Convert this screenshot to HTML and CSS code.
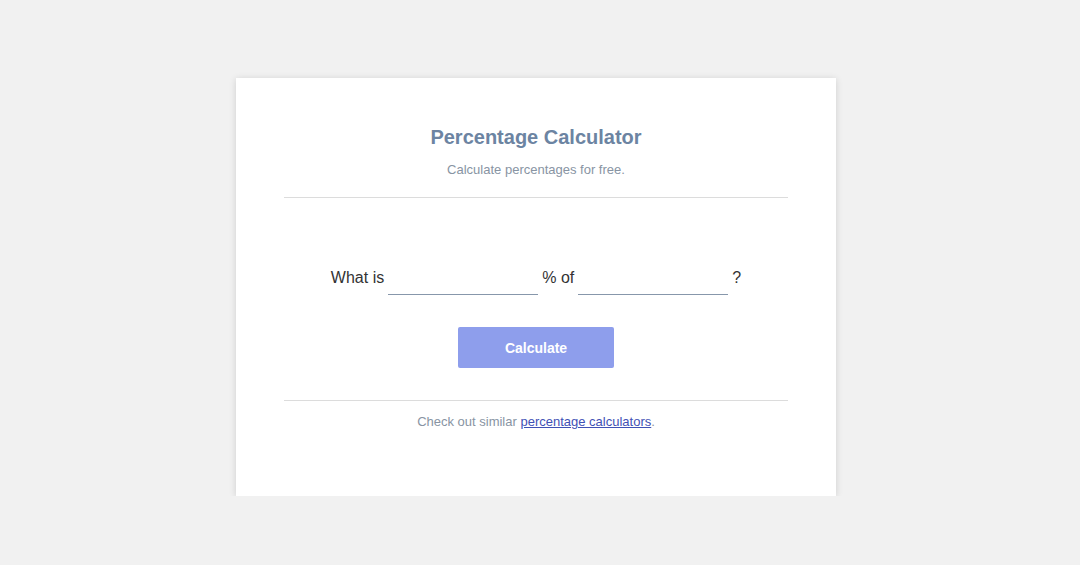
FILE: index.html
```html
<!DOCTYPE html>
<html>
<head>
<meta charset="utf-8">
<link rel="stylesheet" href="styles.css">
</head>
<body>
<main class="page">
  <section class="card">
    <header class="head">
      <h1 class="title">Percentage Calculator</h1>
      <p class="subtitle">Calculate percentages for free.</p>
    </header>
    <div class="calc">
      <div class="row">
        <span class="label">What is</span>
        <input class="field" type="text">
        <span class="label">% of</span>
        <input class="field" type="text">
        <span class="label">?</span>
      </div>
      <button class="btn" type="button">Calculate</button>
    </div>
    <footer class="foot">
      Check out similar <a class="link" href="#">percentage calculators</a>.
    </footer>
  </section>
</main>
</body>
</html>
```
FILE: styles.css
```css
html, body {
  margin: 0;
  padding: 0;
  background: #f1f1f1;
  font-family: "Liberation Sans", Arial, sans-serif;
}
.page {
  display: flex;
  justify-content: center;
  padding-top: 78px;
  padding-right: 8px;
}
.card {
  width: 600px;
  height: 418px;
  box-sizing: border-box;
  background: #fff;
  box-shadow: 0 1px 7px rgba(0,0,0,0.14);
  padding: 0 48px;
  display: flex;
  flex-direction: column;
}
.head {
  text-align: center;
  padding-top: 47px;
  padding-bottom: 19px;
  border-bottom: 1px solid #dcdcdc;
}
.title {
  margin: 0;
  font-size: 20px;
  font-weight: bold;
  color: #6c84a2;
  line-height: 24px;
}
.subtitle {
  margin: 13px 0 0;
  font-size: 13px;
  color: #8894a3;
  line-height: 16px;
}
.calc {
  display: flex;
  flex-direction: column;
  align-items: center;
  padding-top: 67px;
  padding-bottom: 32px;
  border-bottom: 1px solid #dcdcdc;
}
.row {
  display: flex;
  align-items: flex-end;
  gap: 4px;
}
.label {
  font-size: 16px;
  color: #333;
  line-height: 18px;
  padding-bottom: 8px;
}
.field {
  width: 150px;
  height: 30px;
  box-sizing: border-box;
  border: none;
  border-bottom: 1px solid #8797ab;
  outline: none;
  background: transparent;
  font: inherit;
  padding: 0;
}
.btn {
  margin-top: 32px;
  width: 156px;
  height: 41px;
  border: none;
  border-radius: 2px;
  background: #8e9eec;
  color: #fff;
  font-family: "Liberation Sans", Arial, sans-serif;
  font-size: 14px;
  font-weight: bold;
}
.foot {
  text-align: center;
  font-size: 13px;
  color: #8894a3;
  padding-top: 13px;
  line-height: 16px;
}
.link {
  color: #3f51b5;
}
```
